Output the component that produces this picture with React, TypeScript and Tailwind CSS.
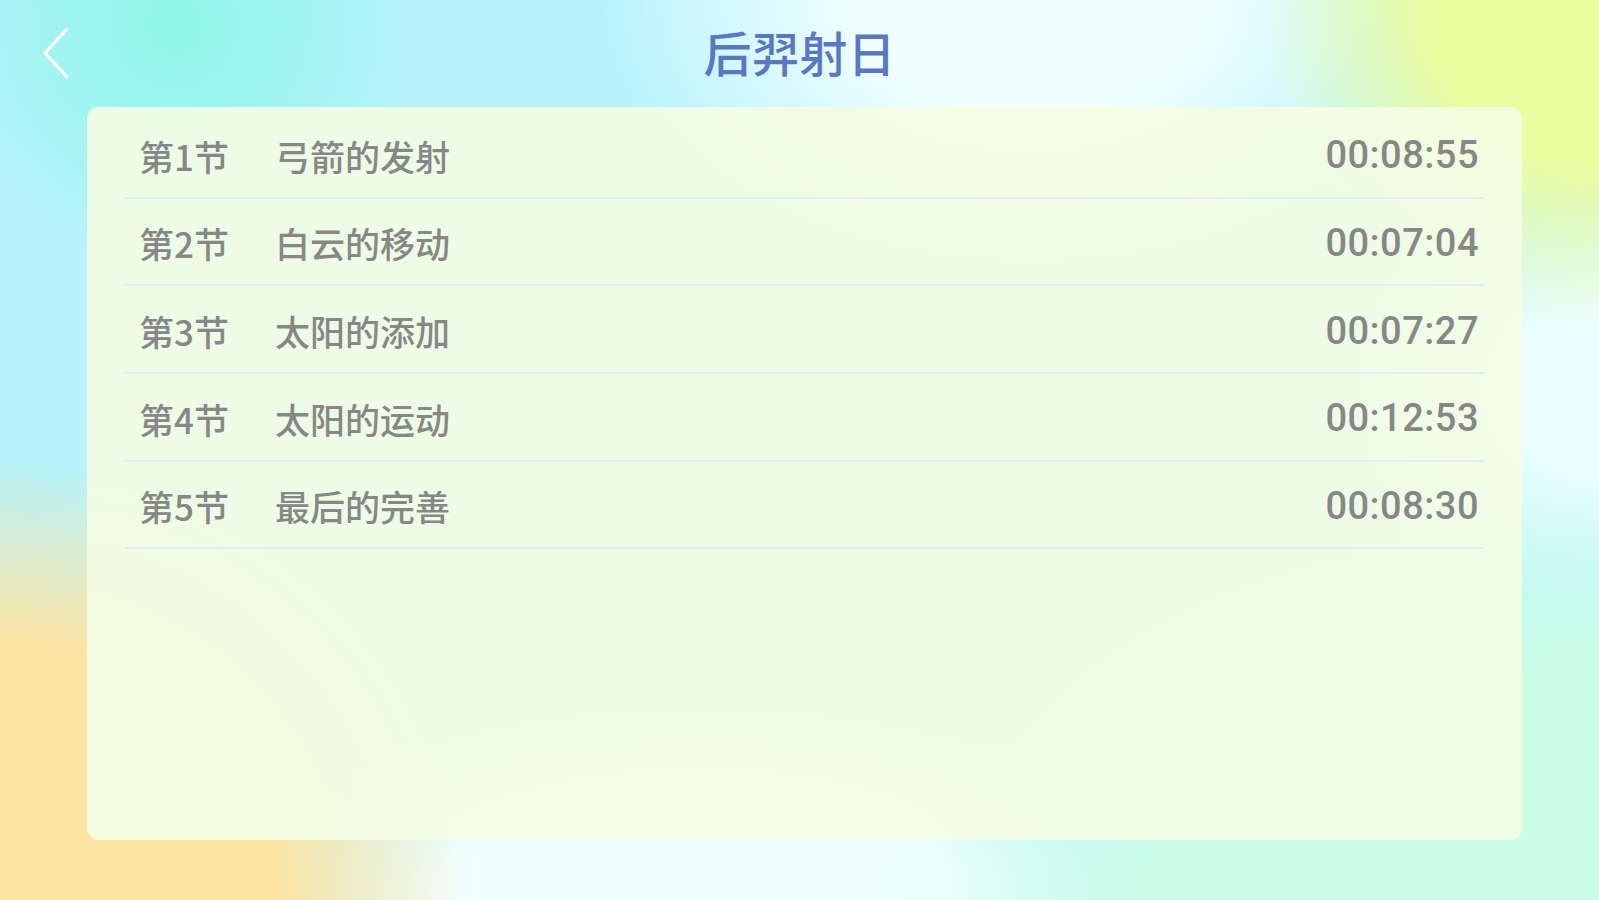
import React from 'react';

const lessons = [
  { no: '第1节', title: '弓箭的发射', time: '00:08:55' },
  { no: '第2节', title: '白云的移动', time: '00:07:04' },
  { no: '第3节', title: '太阳的添加', time: '00:07:27' },
  { no: '第4节', title: '太阳的运动', time: '00:12:53' },
  { no: '第5节', title: '最后的完善', time: '00:08:30' },
];

function BackIcon() {
  return (
    <svg viewBox="0 0 26 52" className="h-[52px] w-[26px]" fill="none" aria-hidden="true">
      <polyline points="24,2 2,26 24,50" stroke="white" strokeWidth="3" strokeLinecap="round" strokeLinejoin="round" />
    </svg>
  );
}

export default function App() {
  return (
    <div className="flex h-[900px] w-full flex-col overflow-hidden bg-[radial-gradient(circle_at_175px_25px,#90f6e9_0px,rgba(144,246,233,0.6)_110px,rgba(144,246,233,0)_240px),radial-gradient(ellipse_340px_330px_at_1599px_0px,#ecfca0_0%,#ecfca0_50%,rgba(236,252,160,0)_100%),radial-gradient(ellipse_470px_440px_at_0px_900px,#fde3a2_0%,#fde3a2_58%,rgba(253,227,162,0)_100%),radial-gradient(ellipse_720px_420px_at_1599px_900px,#ccfde5_0%,#ccfde5_55%,rgba(204,253,229,0)_100%),radial-gradient(ellipse_260px_240px_at_1599px_390px,#eafeff_0%,#eafeff_35%,rgba(234,254,255,0)_100%),radial-gradient(ellipse_480px_200px_at_700px_900px,#f0ffff_0%,#f0ffff_55%,rgba(240,255,255,0)_100%),radial-gradient(ellipse_440px_280px_at_1030px_0px,#f0ffff_0%,#f0ffff_40%,rgba(240,255,255,0)_100%),linear-gradient(180deg,#b5f2fb_0%,#b8f4fb_100%)] font-['Noto_Sans_CJK_SC',sans-serif]">
      <header className="relative flex h-[107px] shrink-0 items-start justify-center">
        <button className="absolute left-[43px] top-[27px]" aria-label="返回">
          <BackIcon />
        </button>
        <h1 className="mt-[16px] text-[48px] leading-[70px] font-medium text-[#5a77c2]">后羿射日</h1>
      </header>

      <main className="ml-[87px] mr-[77px] mb-[60px] flex-1 rounded-[12px] bg-[#f4fde4]/90 px-[38px] pt-[4px]">
        <ul className="flex flex-col">
          {lessons.map((l) => (
            <li
              key={l.no}
              className="flex h-[87.7px] items-center border-b-2 border-[#dcf0f3] pt-[4px] pl-[14px] pr-[5px] text-[#868886]"
            >
              <span className="w-[136px] text-[35px] font-medium">{l.no}</span>
              <span className="flex-1 text-[35px] font-medium">{l.title}</span>
              <span className="font-['Roboto',sans-serif] text-[38px] font-medium tracking-[0.5px]">{l.time}</span>
            </li>
          ))}
        </ul>
      </main>
    </div>
  );
}
